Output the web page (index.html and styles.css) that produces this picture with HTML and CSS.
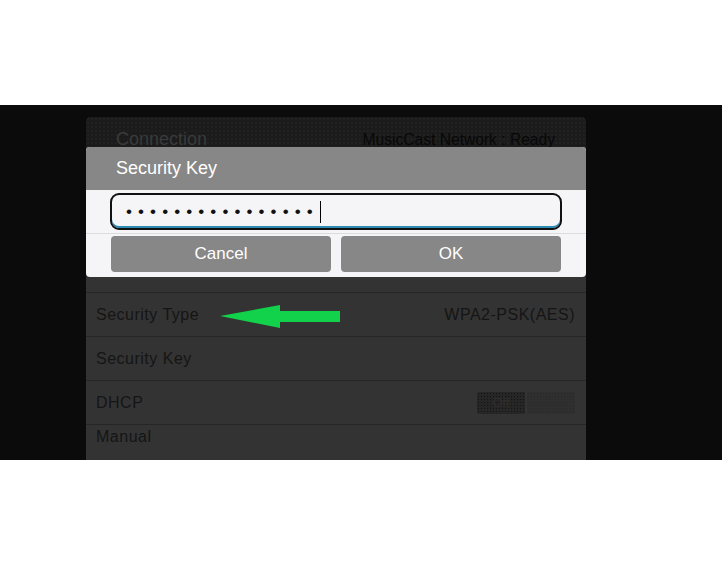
FILE: index.html
```html
<!DOCTYPE html>
<html>
<head>
    <meta charset="utf-8">
    <meta name="viewport" content="width=device-width, initial-scale=1">
    <title>Connection - Security Key</title>
    <link rel="stylesheet" href="styles.css">
</head>
<body>
    <div class="top"></div>
    <div class="stage">
        <div class="panel">
            <div class="panel-head">
                <span class="panel-title">Connection</span>
                <span class="panel-status">MusicCast Network : Ready</span>
            </div>
            <div class="rows">
                <div class="row">
                    <span>Security Type</span>
                    <span>WPA2-PSK(AES)</span>
                </div>
                <div class="row">
                    <span>Security Key</span>
                </div>
                <div class="row">
                    <span>DHCP</span>
                    <div class="toggle">
                        <span class="toggle-off">Off</span>
                        <span class="toggle-on">On</span>
                    </div>
                </div>
                <div class="row row-head">
                    <span>Manual</span>
                </div>
            </div>
        </div>

        <div class="modal">
            <div class="modal-title">Security Key</div>
            <div class="modal-field">
                <div class="key-input"><span class="key-dots">••••••••••••••••</span><span class="caret"></span></div>
            </div>
            <div class="modal-actions">
                <button class="btn">Cancel</button>
                <button class="btn">OK</button>
            </div>
        </div>

        <svg class="pointer" width="122" height="24" viewBox="0 0 122 24">
            <polygon points="0,11 60,0 60,6 120,6 120,17 60,17 60,23" fill="#12d14a" />
        </svg>
    </div>
    <div class="bottom"></div>
</body>
</html>
```

FILE: styles.css
```css
body {
    margin: 0;
    background: #fff;
    font-family: "Liberation Sans", Arial, sans-serif;
}

.top {
    height: 105px;
}

.stage {
    position: relative;
    height: 355px;
    padding-top: 12px;
    box-sizing: border-box;
    background: #0b0b0b;
    overflow: hidden;
}

.panel {
    margin-left: 86px;
    width: 500px;
    height: 343px;
    background: #333;
    border-radius: 5px 5px 0 0;
    overflow: hidden;
}

.panel-head {
    height: 30px;
    display: flex;
    justify-content: space-between;
    align-items: flex-end;
    padding: 0 31px 0 30px;
    background-color: #1b1b1b;
    background-image: radial-gradient(circle, #242424 0.6px, transparent 0.9px);
    background-size: 4px 4px;
}

.panel-title {
    font-size: 18px;
    line-height: 18px;
    color: #3a3a3a;
    margin-bottom: -1px;
}

.panel-status {
    font-size: 15.6px;
    line-height: 16px;
    color: #080808;
    margin-bottom: -1px;
}

.rows {
    margin-top: 145px;
}

.row {
    height: 44px;
    box-sizing: border-box;
    display: flex;
    justify-content: space-between;
    align-items: center;
    padding: 0 11px 0 10px;
    border-top: 1px solid #262626;
    font-size: 16px;
    letter-spacing: 0.5px;
    color: #151515;
}

.row-head {
    align-items: flex-start;
    padding-top: 2px;
    line-height: 20px;
}

.toggle {
    display: flex;
    gap: 2px;
    font-size: 13px;
    letter-spacing: 0;
    color: #2e2e2e;
}

.toggle span {
    width: 48px;
    height: 22px;
    line-height: 22px;
    text-align: center;
    background-size: 3px 3px;
}

.toggle-off {
    border-radius: 3px 0 0 3px;
    background-color: #262626;
    background-image: radial-gradient(circle, #141414 0.8px, transparent 1px);
}

.toggle-on {
    border-radius: 0 3px 3px 0;
    background-color: #2f2f2f;
    background-image: radial-gradient(circle, #282828 0.8px, transparent 1px);
}

/* dialog over the panel */
.modal {
    position: absolute;
    top: 42px;
    left: 86px;
    width: 500px;
    border-radius: 4px;
    overflow: hidden;
    background: #f5f5f7;
}

.modal-title {
    height: 43px;
    line-height: 43px;
    padding-left: 30px;
    background: #878787;
    color: #fff;
    font-size: 18px;
}

.modal-field {
    padding: 3px 24px;
    border-bottom: 1px solid #dcdcdc;
}

.key-input {
    height: 37px;
    box-sizing: border-box;
    display: flex;
    align-items: center;
    padding-left: 14px;
    border: 2px solid #111;
    border-radius: 9px;
    box-shadow: inset 0 -2px 0 #2c8bb3;
}

.key-dots {
    font-size: 17px;
    letter-spacing: 6.1px;
    color: #111;
}

.caret {
    display: inline-block;
    width: 1px;
    height: 22px;
    margin-left: 1px;
    background: #000;
}

.modal-actions {
    display: flex;
    gap: 10px;
    padding: 2px 25px 5px;
}

.btn {
    flex: 1;
    height: 36px;
    border: 0;
    border-radius: 4px;
    background: #878787;
    color: #fff;
    font-family: inherit;
    font-size: 17px;
}

.pointer {
    position: absolute;
    left: 220px;
    top: 200px;
}

.bottom {
    height: 104px;
}
```
